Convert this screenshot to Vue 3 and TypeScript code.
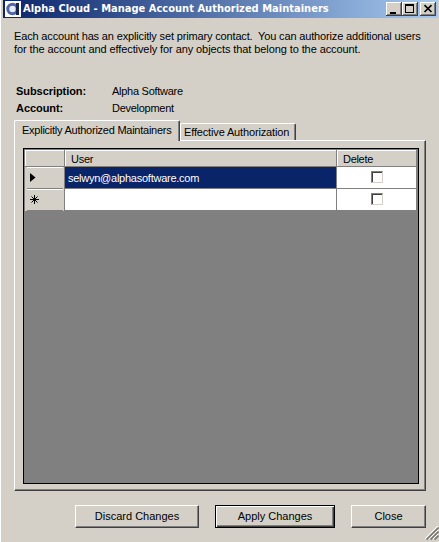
<script setup lang="ts">
import { ref } from 'vue'

interface Maintainer {
  user: string
  remove: boolean
}

const activeTab = ref(0)
const rows = ref<Maintainer[]>([
  { user: 'selwyn@alphasoftware.com', remove: false },
  { user: '', remove: false },
])
</script>

<template>
  <div class="window">
    <header class="titlebar">
      <svg class="logo" width="16" height="16" viewBox="0 0 16 16">
        <rect width="16" height="16" fill="#fff" />
        <circle cx="7.500" cy="8" r="4.700" fill="#e6ebfa" stroke="#5266a4" stroke-width="3" />
        <path d="M11 2h3v12h-3z" fill="#182550" />
      </svg>
      <span class="title">Alpha Cloud - Manage Account Authorized Maintainers</span>
      <div class="captions">
        <button class="cap" aria-label="Minimize">
          <svg width="16" height="14" shape-rendering="crispEdges"><path d="M4 10h6v2H4z" /></svg>
        </button>
        <button class="cap" aria-label="Maximize">
          <svg width="16" height="14" shape-rendering="crispEdges"><path d="M3 2h9v9H3zM4 4v6h7V4z" fill-rule="evenodd" /></svg>
        </button>
        <button class="cap close" aria-label="Close window">
          <svg width="16" height="14"><path d="M4.500 3.200l7 6.800M11.500 3.200l-7 6.800" stroke="#000" stroke-width="1.700" /></svg>
        </button>
      </div>
    </header>

    <main class="body">
      <div class="intro">
        <div class="line1">Each account has an explicitly set primary contact.&nbsp; You can authorize additional users</div>
        <div class="line2">for the account and effectively for any objects that belong to the account.</div>
      </div>
      <dl class="facts">
        <dt>Subscription:</dt><dd>Alpha Software</dd>
        <dt>Account:</dt><dd>Development</dd>
      </dl>

      <nav class="tabs">
        <div class="tab first" :class="{ active: activeTab === 0 }"><span>Explicitly Authorized Maintainers</span></div>
        <div class="tab second" :class="{ active: activeTab === 1 }"><span>Effective Authorization</span></div>
      </nav>
      <section class="panel">
        <div class="grid">
          <div class="row head">
            <div class="rh"></div>
            <div class="user"><span>User</span></div>
            <div class="del"><span>Delete</span></div>
          </div>
          <div v-for="(row, i) in rows" :key="i" class="row" :class="{ selected: i === 0 }">
            <div class="rh">
              <svg v-if="i === 0" width="10" height="11" viewBox="0 0 10 11"><path d="M0 1l5.500 4.500l-5.500 4.500z" /></svg>
              <svg v-else width="10" height="11" viewBox="0 0 10 11">
                <path d="M4.500 1v9M0 5.500h9M1.500 2.500l6 6M7.500 2.500l-6 6" stroke="#000" stroke-width="1" />
              </svg>
            </div>
            <div class="user"><span>{{ row.user }}</span></div>
            <div class="del"><i class="check"></i></div>
          </div>
        </div>
      </section>

      <footer class="actions">
        <button class="btn discard">Discard Changes</button>
        <button class="btn apply">Apply Changes</button>
        <button class="btn done">Close</button>
      </footer>
    </main>
    <svg class="grip" width="14" height="14" viewBox="0 0 14 14">
      <path d="M0 13L13 0M4 13l9-9M8 13l5-5" stroke="#fff" stroke-width="1.200" />
      <path d="M1.500 13.500l12-12M5.500 13.500l8-8M9.500 13.500l4-4" stroke="#77756f" stroke-width="1.700" />
    </svg>
  </div>
</template>

<style>
body { background: #d4d0c8; overflow: hidden; }
</style>

<style scoped>
* { box-sizing: border-box; }
.window {
  position: relative; width: 439px; height: 542px; background: #d4d0c8;
  border-left: 1px solid #fff; color: #000; overflow: hidden;
  font: 11px/13px "Liberation Sans", Arial, sans-serif;
}
.titlebar {
  display: flex; align-items: center; height: 18px; margin: 0 1px 0 2px; padding-left: 2px;
  background: linear-gradient(90deg, #0a246a, #a6caf0);
}
.logo { flex: none; }
.title {
  margin-left: 2px; color: #fff; white-space: nowrap; line-height: 18px; letter-spacing: 0.02px;
  font-family: "DejaVu Sans", sans-serif; font-stretch: condensed; font-size: 11px; font-weight: bold;
}
.captions { display: flex; margin-left: auto; padding-right: 2px; }
.cap {
  width: 16px; height: 14px; padding: 0; border: 0; background: #d4d0c8; display: block;
  box-shadow: inset -1px -1px #404040, inset 1px 1px #fff, inset -2px -2px #808080;
}
.cap svg { display: block; }
.close { margin-left: 2px; }
.body { padding: 0 13px; }
.intro { padding-top: 12px; white-space: nowrap; }
.line1 { letter-spacing: -0.155px; }
.line2 { letter-spacing: -0.09px; }
.facts { display: grid; grid-template-columns: 96px 1fr; grid-auto-rows: 17px; margin: 29px 0 0 2px; }
dt { font-weight: bold; letter-spacing: -0.06px; }
dd { margin: 0; letter-spacing: -0.27px; }
.tabs { display: flex; align-items: flex-end; height: 20px; margin-top: 1px; }
.tab {
  height: 17px; border-top: 1px solid #fff; border-right: 1px solid #404040;
  box-shadow: inset -1px 0 #808080; border-radius: 2px 2px 0 0; white-space: nowrap;
}
.tab span { display: block; }
.first { width: 166px; padding: 3px 0 0 7px; border-left: 1px solid #fff; letter-spacing: -0.25px; }
.second { width: 116px; padding: 2px 0 0 3px; border-left: 1px solid #fff; letter-spacing: -0.15px; }
.active { height: 21px; margin-bottom: -1px; position: relative; background: #d4d0c8; }
.panel {
  width: 412px; height: 351px; padding: 7px 0 0 8px; border: 1px solid;
  border-color: #fff #404040 #404040 #fff; box-shadow: inset -1px -1px #808080;
}
.grid { width: 396px; height: 336px; border: 1px solid #000; background: #808080; padding: 1px; }
.row { display: flex; height: 22px; background: #fff; }
.row > div { border-right: 1px solid #808080; border-bottom: 1px solid #808080; }
.row .rh {
  width: 40px; padding: 5px 0 0 5px; border-bottom: 0;
  background:
    linear-gradient(#fff, #fff) 2px 0 / 36px 1px no-repeat,
    linear-gradient(#808080, #808080) 2px 100% / 36px 1px no-repeat,
    #d4d0c8;
}
.rh svg { display: block; }
.user { width: 272px; padding: 5px 0 0 3px; letter-spacing: -0.25px; }
.row .del { width: 80px; padding: 4px 0 0 34px; letter-spacing: -0.3px; }
.head { height: 17px; background: #d4d0c8; }
.head > div { box-shadow: inset 1px 1px #fff; }
.row.head .rh { background: #d4d0c8; border-bottom: 1px solid #808080; }
.head .user { padding: 3px 0 0 6px; }
.row.head .del { padding: 3px 0 0 6px; }
.selected .user { background: #0a246a; color: #fff; }
.check {
  display: block; width: 12px; height: 12px; border: 1px solid; border-color: #808080 #d4d0c8 #d4d0c8 #808080;
  box-shadow: inset 1px 1px #404040;
}
.actions { display: flex; margin-top: 14px; padding-left: 61px; }
.btn {
  height: 23px; padding: 0; border: 1px solid; border-color: #fff #404040 #404040 #fff; border-radius: 0;
  background: #d4d0c8; color: #000; font: inherit; box-shadow: inset -1px -1px #808080; white-space: nowrap;
}
.apply { width: 120px; margin-left: 16px; border-color: #000; box-shadow: inset 1px 1px #fff, inset -1px -1px #404040, inset -2px -2px #808080; }
.discard { width: 124px; }
.done { width: 75px; margin-left: 16px; }
.grip { position: absolute; right: 0; bottom: 2px; }
</style>
